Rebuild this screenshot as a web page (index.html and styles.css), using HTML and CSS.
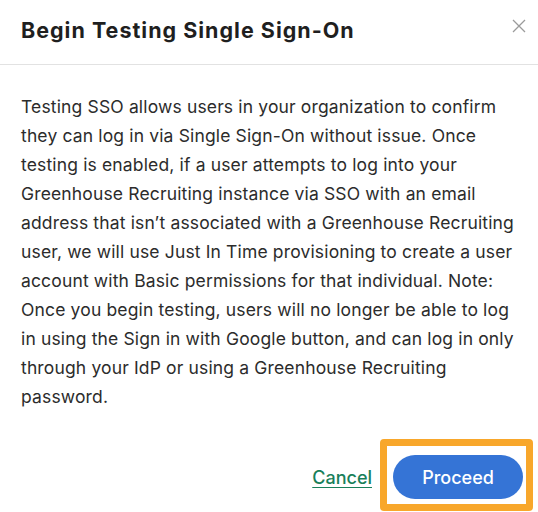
FILE: index.html
```html
<!DOCTYPE html>
<html lang="en">
<head>
<meta charset="utf-8">
<title>Begin Testing Single Sign-On</title>
<link rel="stylesheet" href="styles.css">
</head>
<body>
<div class="modal">
  <div class="modal-header">
    <h1 class="modal-title">Begin Testing Single Sign-On</h1>
    <button class="close-btn" aria-label="Close">
      <svg width="14" height="14" viewBox="0 0 14 14"><path d="M1 1L13 13M13 1L1 13" stroke="#9b9b9b" stroke-width="1.3" fill="none"/></svg>
    </button>
  </div>
  <div class="modal-body">
    <p>Testing SSO allows users in your organization to confirm they can log in via Single Sign-On without issue. Once testing is enabled, if a user attempts to log into your Greenhouse Recruiting instance via SSO with an email address that isn’t associated with a Greenhouse Recruiting user, we will use Just In Time provisioning to create a user account with Basic permissions for that individual. Note: Once you begin testing, users will no longer be able to log in using the Sign in with Google button, and can log in only through your IdP or using a Greenhouse Recruiting password.</p>
  </div>
  <div class="modal-footer">
    <a class="cancel-link" href="#">Cancel</a>
    <button class="proceed-btn">Proceed</button>
  </div>
  <div class="focus-ring"></div>
</div>
</body>
</html>
```
FILE: styles.css
```css
html, body {
  margin: 0;
  padding: 0;
  background: #ffffff;
}
body {
  font-family: Inter, "Noto Sans", sans-serif;
  color: #2c2c2c;
}
.modal {
  position: relative;
  width: 538px;
  height: 512px;
  overflow: hidden;
}
.modal-header {
  display: flex;
  justify-content: space-between;
  align-items: center;
  box-sizing: border-box;
  padding: 0 12px 0 21px;
  border-bottom: 1px solid #e2e2e2;
  height: 65px;
}
.modal-title {
  margin: 0;
  font-size: 21.5px;
  font-weight: 700;
  color: #1f1f1f;
  letter-spacing: 1px;
  position: relative;
  top: -2px;
}
.close-btn {
  border: 0;
  background: none;
  padding: 0;
  width: 14px;
  height: 14px;
  display: flex;
  position: relative;
  top: -6px;
}
.modal-body {
  padding: 27px 17px 0 21px;
}
.modal-body p {
  margin: 0;
  font-size: 17.5px;
  line-height: 29px;
  letter-spacing: 0.15px;
}
.modal-footer {
  display: flex;
  justify-content: flex-end;
  align-items: center;
  gap: 21px;
  padding: 44px 15px 0 0;
}
.cancel-link {
  color: #19805a;
  font-size: 18px;
  font-weight: 500;
  text-decoration: underline;
  text-underline-offset: 3px;
}
.proceed-btn {
  width: 130px;
  height: 44px;
  border: 0;
  border-radius: 22px;
  background: #3574d6;
  color: #ffffff;
  font-family: Inter, "Noto Sans", sans-serif;
  font-size: 18px;
  font-weight: 500;
}
.focus-ring {
  position: absolute;
  left: 380px;
  top: 439px;
  width: 153px;
  height: 72px;
  box-sizing: border-box;
  border: 7px solid #f8a72b;
  border-radius: 4px;
  pointer-events: none;
}
```
